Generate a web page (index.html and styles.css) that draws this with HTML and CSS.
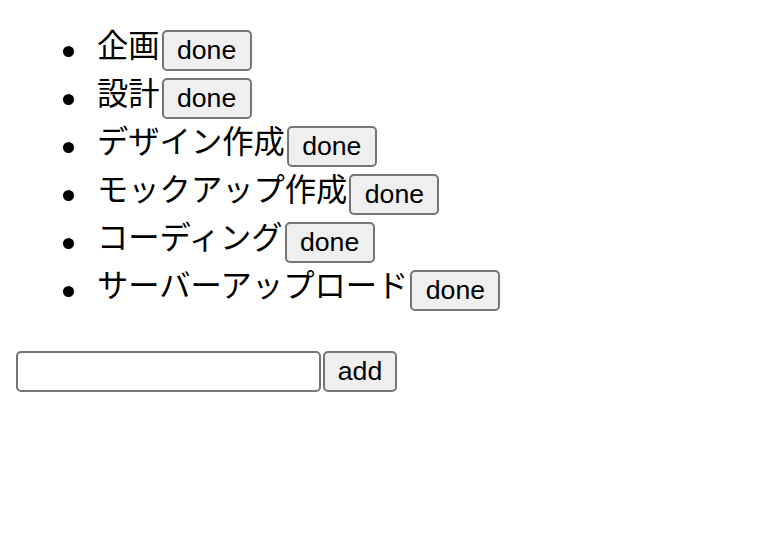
FILE: index.html
```html
<!DOCTYPE html>
<html lang="ja">
<head>
<meta charset="utf-8">
<title>ToDo</title>
<link rel="stylesheet" href="styles.css">
</head>
<body>
<ul class="todo-list">
  <li class="todo-item"><span class="todo-text">企画</span><button class="btn">done</button></li>
  <li class="todo-item"><span class="todo-text">設計</span><button class="btn">done</button></li>
  <li class="todo-item"><span class="todo-text">デザイン作成</span><button class="btn">done</button></li>
  <li class="todo-item"><span class="todo-text">モックアップ作成</span><button class="btn">done</button></li>
  <li class="todo-item"><span class="todo-text">コーディング</span><button class="btn">done</button></li>
  <li class="todo-item"><span class="todo-text">サーバーアップロード</span><button class="btn">done</button></li>
</ul>
<div class="add-row"><input class="add-input" type="text"><button class="btn btn-add">add</button></div>
</body>
</html>
```

FILE: styles.css
```css
html, body {
  margin: 0;
  padding: 0;
  background: #fff;
}
body {
  padding: 24px 16px 0 16px;
  font-family: "Liberation Sans", "Noto Sans CJK JP", sans-serif;
  font-size: 31.3px;
  color: #000;
}
.todo-list {
  margin: 0;
  padding: 0 0 0 47px;
  list-style: none;
}
.todo-item {
  display: flex;
  align-items: flex-start;
  height: 48px;
}
.todo-item::before {
  content: "";
  flex: none;
  width: 11px;
  height: 11px;
  border-radius: 50%;
  background: #000;
  margin: 22px 23px 0 0;
}
.todo-text {
  display: block;
  line-height: 48px;
  margin-top: -1px;
}
.btn {
  font-family: "Liberation Sans", sans-serif;
  font-size: 26.67px;
  height: 41px;
  line-height: 37px;
  width: 90px;
  padding: 0;
  margin: 6px 0 0 2px;
  border: 2px solid #767676;
  border-radius: 5px;
  background: #efefef;
  color: #000;
  box-sizing: border-box;
  text-align: center;
}
.add-row {
  display: flex;
  align-items: flex-start;
  margin-top: 39px;
}
.add-input {
  width: 305px;
  height: 41px;
  box-sizing: border-box;
  border: 2px solid #767676;
  border-radius: 5px;
  margin: 0;
  padding: 2px 4px;
  font-size: 26.67px;
  background: #fff;
}
.btn-add {
  margin: 0 0 0 2px;
  width: 74px;
}
```
